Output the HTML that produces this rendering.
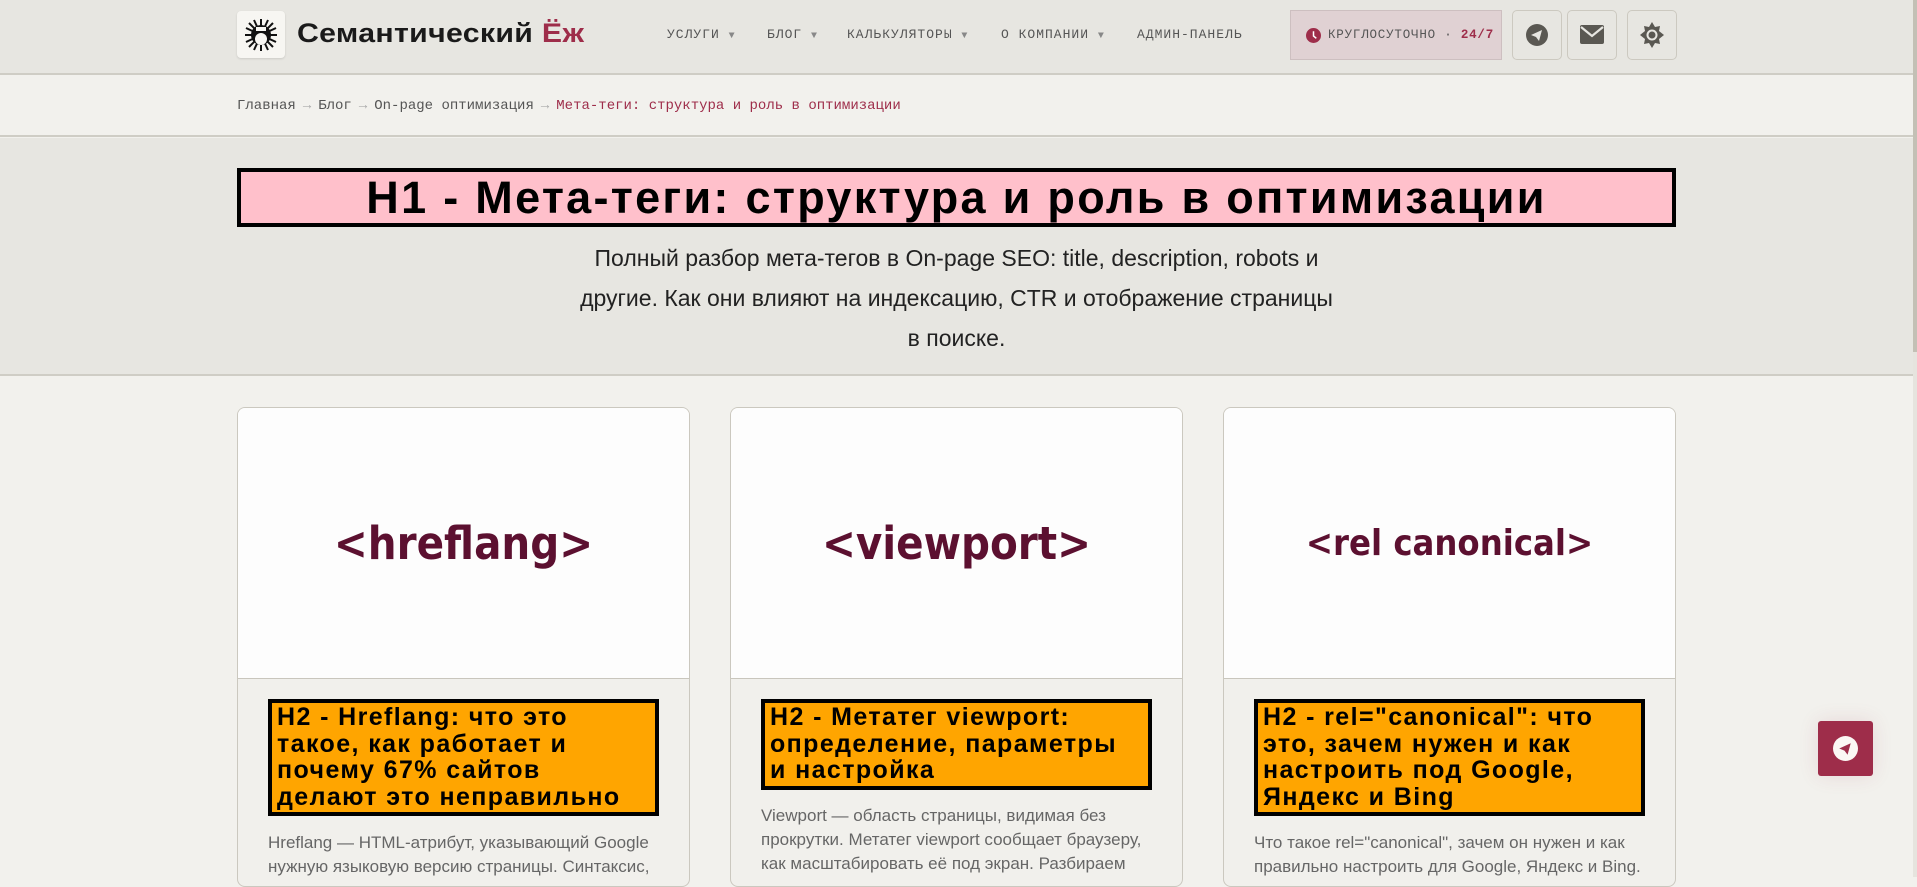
<!DOCTYPE html>
<html><head><meta charset="utf-8"><style>
*{box-sizing:border-box;margin:0;padding:0}
body{width:1917px;height:877px;overflow:hidden;background:#f2f1ed;font-family:"Liberation Sans",sans-serif;position:relative}
.hdr{position:absolute;left:0;top:0;width:1913px;height:75px;background:#e7e6e1;border-bottom:2px solid #cfcdc5}
.logo{position:absolute;left:237px;top:11px;width:48px;height:47px;background:#f7f6f2;border-radius:4px;box-shadow:0 1px 2px rgba(0,0,0,.12)}
.brand{position:absolute;left:297px;top:18px;font-size:27px;font-weight:bold;color:#1a1a1a;letter-spacing:.3px;transform:scaleX(1.12);transform-origin:left;white-space:nowrap}
.brand span{color:#9e2d4a}
.nav{position:absolute;top:27px;font-family:"Liberation Mono",monospace;font-size:13px;color:#555;letter-spacing:1px;white-space:nowrap}
.nav i{font-style:normal;color:#888;font-size:10px}
.badge{position:absolute;left:1290px;top:10px;width:212px;height:50px;background:#e0d1d3;border:1px solid #cdbfc0;font-family:"Liberation Mono",monospace;font-size:12.5px;color:#555;letter-spacing:.8px;line-height:48px;padding-left:37px;white-space:nowrap}
.badge b{color:#9e2d4a}
.btn{position:absolute;top:10px;width:50px;height:50px;border:1px solid #ccc9c0;border-radius:5px;background:#e7e6e1}
.bc{position:absolute;left:0;top:76px;width:1913px;height:61px;background:#f2f1ed;border-bottom:2px solid #cfcdc5}
.bct{position:absolute;left:237px;top:22px;font-family:"Liberation Mono",monospace;font-size:14px;color:#555;white-space:nowrap}
.bct i{font-style:normal;color:#aaa;margin:0 7px}
.bct span{color:#9e2d4a}
.hero{position:absolute;left:0;top:138px;width:1913px;height:238px;background:#e7e6e1;border-bottom:2px solid #cfcdc5}
.h1{position:absolute;left:237px;top:30px;width:1439px;height:59px;background:#ffc0cb;border:4px solid #000;text-align:center;font-size:45px;font-weight:bold;line-height:51px;color:#000;letter-spacing:2.3px;white-space:nowrap}
.sub{position:absolute;left:450px;top:100px;width:1013px;text-align:center;font-size:23px;line-height:40px;color:#222}
.card{position:absolute;top:407px;width:453px;height:480px;background:#f1f0ec;border:1px solid #cbc8bf;border-radius:8px;overflow:hidden}
.img{height:271px;background:#fdfdfd;border-bottom:1px solid #c9c6bd;text-align:center;color:#5c1030;font-family:"DejaVu Sans Condensed","DejaVu Sans",sans-serif;font-weight:bold}
.h2{position:absolute;left:30px;top:291px;width:391px;background:#ffa500;border:4px solid #000;padding:1px 4px 2px 5px;font-size:25px;font-weight:bold;line-height:26.5px;color:#000;white-space:nowrap;letter-spacing:1.4px}
.d{position:absolute;left:30px;width:400px;font-size:17px;line-height:24px;color:#666;white-space:nowrap}
.scr{position:absolute;left:1913px;top:0;width:4px;height:877px;background:#e6e4de}
.scr div{height:352px;background:#c3c0b5}
.fab{position:absolute;left:1818px;top:721px;width:55px;height:55px;background:#9e2d4a;border-radius:3px;box-shadow:0 0 20px rgba(158,45,74,.12)}
</style></head><body>
<div class="hdr">
 <div class="logo"><svg width="48" height="47" viewBox="0 0 48 47"><g stroke="#111" stroke-width="2"><line x1="24" y1="8" x2="24" y2="40"/><line x1="8" y1="24" x2="40" y2="24"/><line x1="12" y1="12" x2="36" y2="36"/><line x1="36" y1="12" x2="12" y2="36"/><line x1="17" y1="9" x2="31" y2="39"/><line x1="31" y1="9" x2="17" y2="39"/><line x1="9" y1="17" x2="39" y2="31"/><line x1="39" y1="17" x2="9" y2="31"/></g><circle cx="24" cy="24" r="10" fill="#111"/><circle cx="24" cy="28" r="6" fill="#f7f6f2"/><rect x="19" y="16" width="10" height="4" fill="#f7f6f2"/></svg></div>
 <div class="brand">Семантический <span>Ёж</span></div>
 <div class="nav" style="left:667px">УСЛУГИ <i>▼</i></div>
 <div class="nav" style="left:767px">БЛОГ <i>▼</i></div>
 <div class="nav" style="left:847px">КАЛЬКУЛЯТОРЫ <i>▼</i></div>
 <div class="nav" style="left:1001px">О КОМПАНИИ <i>▼</i></div>
 <div class="nav" style="left:1137px">АДМИН-ПАНЕЛЬ</div>
 <div class="badge"><svg style="position:absolute;left:15px;top:17px" width="15" height="15" viewBox="0 0 16 16"><circle cx="8" cy="8" r="8" fill="#9e2d4a"/><path d="M8 3.5V8.5L11 11" stroke="#fff" stroke-width="1.6" fill="none"/></svg>КРУГЛОСУТОЧНО · <b>24/7</b></div>
 <div class="btn" style="left:1512px"><svg style="position:absolute;left:13px;top:13px" width="22" height="22" viewBox="0 0 22 22"><circle cx="11" cy="11" r="11" fill="#5a5852"/><path d="M5 11l11-5-3 11-3-4z" fill="#e7e6e1"/></svg></div>
 <div class="btn" style="left:1567px"><svg style="position:absolute;left:12px;top:14px" width="24" height="19" viewBox="0 0 24 19"><rect width="24" height="19" rx="2" fill="#5a5852"/><path d="M1 2l11 9 11-9" stroke="#e7e6e1" stroke-width="2.2" fill="none"/></svg></div>
 <div class="btn" style="left:1627px"><svg style="position:absolute;left:11px;top:11px" width="26" height="26" viewBox="0 0 26 26"><g fill="#5a5852"><path d="M13 0l3 5 5-1-1 5 5 4-5 4 1 5-5-1-3 5-3-5-5 1 1-5-5-4 5-4-1-5 5 1z"/></g><circle cx="13" cy="13" r="5.5" fill="#e7e6e1"/><circle cx="13" cy="13" r="3.5" fill="#5a5852"/></svg></div>
</div>
<div class="bc"><div class="bct">Главная<i>→</i>Блог<i>→</i>On-page оптимизация<i>→</i><span>Мета-теги: структура и роль в оптимизации</span></div></div>
<div class="hero">
 <div class="h1">H1 - Мета-теги: структура и роль в оптимизации</div>
 <div class="sub">Полный разбор мета-тегов в On-page SEO: title, description, robots и<br>другие. Как они влияют на индексацию, CTR и отображение страницы<br>в поиске.</div>
</div>
<div class="card" style="left:237px">
 <div class="img" style="font-size:45px;line-height:271px">&lt;hreflang&gt;</div>
 <div class="h2">H2 - Hreflang: что это<br>такое, как работает и<br>почему 67% сайтов<br>делают это неправильно</div>
 <div class="d" style="top:423px">Hreflang — HTML-атрибут, указывающий Google<br>нужную языковую версию страницы. Синтаксис,</div>
</div>
<div class="card" style="left:730px">
 <div class="img" style="font-size:45px;line-height:271px">&lt;viewport&gt;</div>
 <div class="h2">H2 - Метатег viewport:<br>определение, параметры<br>и настройка</div>
 <div class="d" style="top:396px">Viewport — область страницы, видимая без<br>прокрутки. Метатег viewport сообщает браузеру,<br>как масштабировать её под экран. Разбираем</div>
</div>
<div class="card" style="left:1223px">
 <div class="img" style="font-size:36px;line-height:271px">&lt;rel canonical&gt;</div>
 <div class="h2">H2 - rel="canonical": что<br>это, зачем нужен и как<br>настроить под Google,<br>Яндекс и Bing</div>
 <div class="d" style="top:423px">Что такое rel="canonical", зачем он нужен и как<br>правильно настроить для Google, Яндекс и Bing.</div>
</div>
<div class="fab"><svg style="position:absolute;left:15px;top:15px" width="25" height="25" viewBox="0 0 24 24"><circle cx="12" cy="12" r="12" fill="#fbf7f4"/><path d="M6 12l11-5-3 11-3-4z" fill="#9e2d4a"/></svg></div>
<div class="scr"><div></div></div>
</body></html>
